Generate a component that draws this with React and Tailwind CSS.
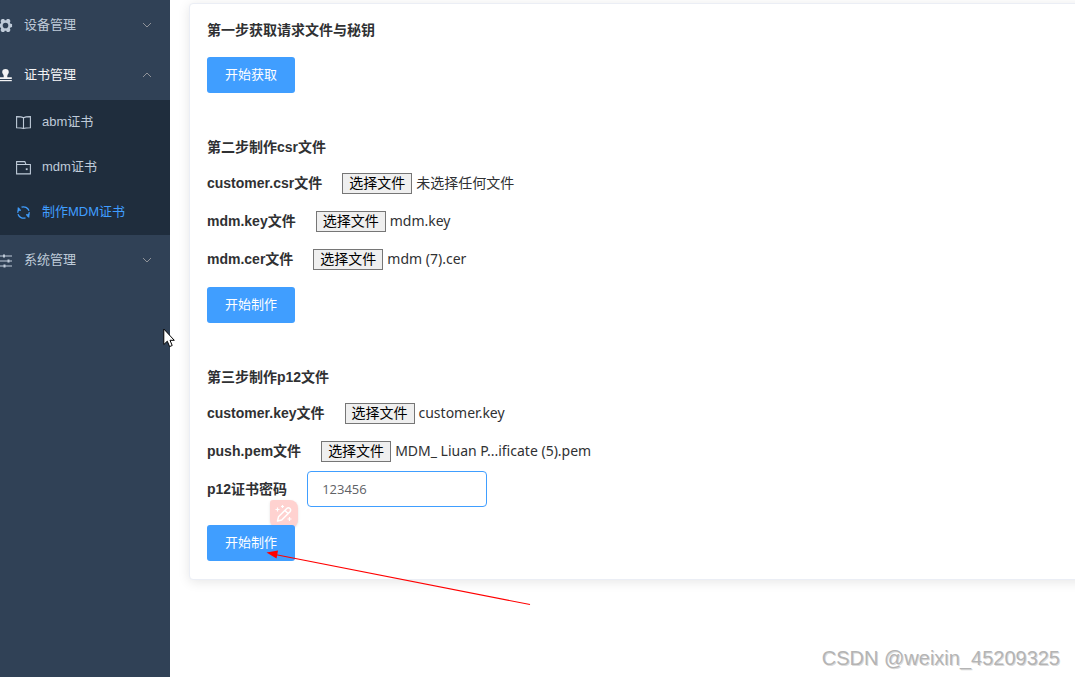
import { useRef } from 'react';

function Gear() {
  return (
    <svg className="-ml-0.5 size-[15px] shrink-0" viewBox="0 0 16 16" fill="currentColor" aria-hidden="true">
      <path
        fillRule="evenodd"
        d="M4 1h2.600l.5 1.300h1.800L9.400 1H12l1.300 2.200-.7 1.500.7 1.300 1.700.3V9.700l-1.700.3-.7 1.300.7 1.500L12 15H9.400l-.5-1.300H7.100L6.600 15H4l-1.300-2.200.7-1.500-.7-1.300L1 9.700V6.300L2.700 6l.7-1.300-.7-1.500zM8 5a3 3 0 1 0 0 6 3 3 0 0 0 0-6z"
      />
    </svg>
  );
}

function Stamp() {
  return (
    <svg className="-ml-0.5 size-[15px] shrink-0" viewBox="0 0 15 15" fill="currentColor" aria-hidden="true">
      <path d="M7.500 1a3.300 3.300 0 0 1 3.300 3.300c0 1.500-1.500 2.200-1.500 3.700v1.200h4.500v1.800H1.200V9.200h4.500V8c0-1.500-1.500-2.200-1.500-3.700A3.300 3.300 0 0 1 7.500 1z" />
      <path d="M1.200 12h12.600v1.200H1.200z" />
    </svg>
  );
}

function Sliders() {
  return (
    <svg className="-ml-0.5 size-[15px] shrink-0" viewBox="0 0 15 15" fill="none" stroke="currentColor" strokeWidth="1.200" aria-hidden="true">
      <path d="M1 3h13M1 8h13M1 13h13" />
      <path d="M6 1.500v3M10.500 6.500v3M6.500 11.500v3" strokeWidth="2" />
    </svg>
  );
}

function Book() {
  return (
    <svg className="size-[15px] shrink-0" viewBox="0 0 15 15" fill="none" stroke="currentColor" strokeWidth="1.100" aria-hidden="true">
      <path d="M7.500 2.800v10.500M.6 1.600c2.700 0 5.200.1 6.900 1.200 1.700-1.100 4.200-1.200 6.900-1.200v11.200c-2.700 0-5.200 0-6.900.8-1.700-.8-4.200-.8-6.900-.8z" />
    </svg>
  );
}

function Wallet() {
  return (
    <svg className="size-[15px] shrink-0" viewBox="0 0 15 15" fill="none" stroke="currentColor" strokeWidth="1.100" aria-hidden="true">
      <path d="M.6 4.500h13.800v9.400H.6zM.6 4.500V1.600h8.200l1.200 2.900" />
      <path d="M9.800 9.200h1.800" strokeWidth="1.800" />
    </svg>
  );
}

function Refresh() {
  return (
    <svg className="size-[15px] shrink-0" viewBox="0 0 15 15" fill="none" stroke="currentColor" strokeWidth="1.300" aria-hidden="true">
      <path d="M1.700 7.800a5.800 5.800 0 0 1 2-4.300M5.500 2.200a5.800 5.800 0 0 1 7.500 3.500M13.300 7.200a5.800 5.800 0 0 1-2 4.300M9.500 12.800a5.800 5.800 0 0 1-7.500-3.500" />
      <path d="M5 5.200H2.300V2.500M10 9.800h2.700v2.700" />
    </svg>
  );
}

function Chevron({ up }) {
  return (
    <svg className="mr-[18px] ml-auto h-[6px] w-[10px] text-[#909399]" viewBox="0 0 10 6" fill="none" stroke="currentColor" strokeWidth="1" aria-hidden="true">
      <path d={up ? 'M1 5l4-4 4 4' : 'M1 1l4 4 4-4'} />
    </svg>
  );
}

function MenuGroup({ icon, label, open, children }) {
  return (
    <li>
      <button
        type="button"
        aria-expanded={!!open}
        className={`flex h-[50px] w-full items-center gap-[11px] text-left ${open ? 'text-[#f4f4f5]' : 'text-[#bfcbd9]'}`}
      >
        {icon}
        <span>{label}</span>
        <Chevron up={open} />
      </button>
      {children}
    </li>
  );
}

function MenuLink({ icon, label, active }) {
  return (
    <li>
      <a
        href="#"
        aria-current={active ? 'page' : undefined}
        className={`flex h-[45px] items-center gap-[11px] pl-4 ${active ? 'text-[#409eff]' : 'text-[#bfcbd9]'}`}
      >
        {icon}
        <span className="pb-0.5">{label}</span>
      </a>
    </li>
  );
}

function FileRow({ id, label, fileName }) {
  const input = useRef(null);
  return (
    <div className="flex h-[38px] items-center">
      <label htmlFor={id} className="mr-5 font-bold">{label}</label>
      <input ref={input} id={id} type="file" tabIndex={-1} className="sr-only" />
      <button
        type="button"
        onClick={() => input.current.click()}
        className="mr-1 h-[21px] border border-[#767676] bg-[#efefef] px-1.5 leading-[19px] text-black"
      >
        选择文件
      </button>
      <span className="font-['Noto_Sans','Noto_Sans_CJK_SC',sans-serif]">{fileName}</span>
    </div>
  );
}

function PrimaryButton({ children }) {
  return (
    <button type="button" className="relative h-9 rounded-[3px] bg-[#409eff] px-[18px] text-[13px] text-white">
      {children}
    </button>
  );
}

function PenBadge() {
  return (
    <span className="absolute -top-[25px] left-[63px] flex h-7 w-7 items-center justify-center rounded-lg rounded-tl-[3px] bg-[#ffd2d0] shadow-sm">
      <svg className="size-5" viewBox="0 0 20 20" fill="none" stroke="white" strokeWidth="1.500" strokeLinejoin="round" aria-hidden="true">
        <path d="M3.500 17l1-4.200 8.300-8.300a2.200 2.200 0 0 1 3.200 3.200l-8.300 8.300zM11 6.500l3 3" />
        <path d="M3.500 3.500v4M1.500 5.500h4M8.500 1v3M7 2.500h3M15.500 13v4M13.500 15h4" strokeWidth="1.200" />
      </svg>
    </span>
  );
}

function Pointer() {
  return (
    <svg className="pointer-events-none absolute top-[328px] left-[163px] h-5 w-3" viewBox="0 0 12 20" aria-hidden="true">
      <path d="M.8 1v15.500l3.500-3.300 2.300 5.400 2.600-1.100L7 12.300h4.300z" fill="white" stroke="black" strokeWidth="1" />
    </svg>
  );
}

export default function App() {
  return (
    <div className="relative flex min-h-screen overflow-hidden bg-white font-['Liberation_Sans','Noto_Sans_CJK_SC',sans-serif] text-[14px] leading-4 text-[#303133]">
      <nav className="w-[170px] shrink-0 bg-[#304156] text-[13px]">
        <ul>
          <MenuGroup icon={<Gear />} label="设备管理" />
          <MenuGroup icon={<Stamp />} label="证书管理" open>
            <ul className="bg-[#1f2d3d]">
              <MenuLink icon={<Book />} label="abm证书" />
              <MenuLink icon={<Wallet />} label="mdm证书" />
              <MenuLink icon={<Refresh />} label="制作MDM证书" active />
            </ul>
          </MenuGroup>
          <MenuGroup icon={<Sliders />} label="系统管理" />
        </ul>
      </nav>

      <main className="min-w-0 grow pt-[3px] pl-[19px]">
        <div className="-mr-4 rounded border border-[#ebeef5] bg-white p-[18px] pl-[17px] shadow-[0_2px_12px_rgba(0,0,0,0.1)]">
          <section>
            <h2 className="mb-[19px] font-bold">第一步获取请求文件与秘钥</h2>
            <PrimaryButton>开始获取</PrimaryButton>
          </section>

          <section className="mt-[46px]">
            <h2 className="mb-[9px] font-bold">第二步制作csr文件</h2>
            <FileRow id="csr" label="customer.csr文件" fileName="未选择任何文件" />
            <FileRow id="mdm-key" label="mdm.key文件" fileName="mdm.key" />
            <FileRow id="mdm-cer" label="mdm.cer文件" fileName="mdm (7).cer" />
            <div className="mt-[9px]">
              <PrimaryButton>开始制作</PrimaryButton>
            </div>
          </section>

          <section className="mt-[46px]">
            <h2 className="mb-[9px] font-bold">第三步制作p12文件</h2>
            <FileRow id="customer-key" label="customer.key文件" fileName="customer.key" />
            <FileRow id="push-pem" label="push.pem文件" fileName="MDM_ Liuan P...ificate (5).pem" />
            <div className="flex h-[38px] items-center">
              <label htmlFor="p12-password" className="mr-5 font-bold">p12证书密码</label>
              <input
                id="p12-password"
                type="text"
                defaultValue="123456"
                className="h-9 w-[180px] rounded border border-[#409eff] bg-white px-3.5 font-['Open_Sans',sans-serif] text-[13px] text-[#606266] outline-none"
              />
            </div>
            <div className="relative mt-[17px]">
              <PenBadge />
              <PrimaryButton>开始制作</PrimaryButton>
              <svg className="pointer-events-none absolute top-5 left-[58px] h-[62px] w-[268px]" viewBox="0 0 268 62" aria-hidden="true">
                <path d="M10 9.500L265 59.500" stroke="#f00" strokeWidth="1.100" />
                <path d="M1.500 7.500L13 5.500 11.500 13.500z" fill="#f00" />
              </svg>
            </div>
          </section>
        </div>
      </main>

      <Pointer />
      <p className="absolute right-[15px] bottom-[7px] text-[20px] leading-6 text-[#b4b4b4] [text-shadow:1px_1px_0_#8c8c8c55]">
        CSDN @weixin_45209325
      </p>
    </div>
  );
}
